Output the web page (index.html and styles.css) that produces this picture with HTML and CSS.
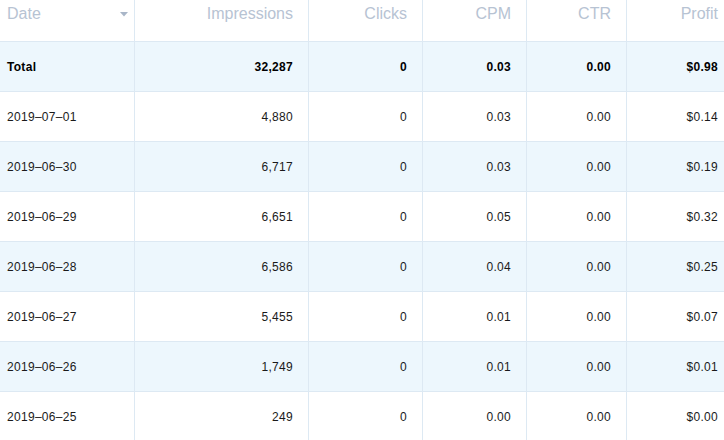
FILE: index.html
```html
<!DOCTYPE html>
<html>
<head>
<meta charset="utf-8">
<link rel="stylesheet" href="styles.css">
</head>
<body>
<div class="grid">
  <div class="cell head left">Date<svg class="sort" width="8" height="5" viewBox="0 0 8 5"><path d="M0 0H8L4 4.5Z" fill="#a9b6c8"/></svg></div>
  <div class="cell head">Impressions</div>
  <div class="cell head">Clicks</div>
  <div class="cell head">CPM</div>
  <div class="cell head">CTR</div>
  <div class="cell head last">Profit</div>

  <div class="cell alt bold left">Total</div>
  <div class="cell alt bold">32,287</div>
  <div class="cell alt bold">0</div>
  <div class="cell alt bold">0.03</div>
  <div class="cell alt bold">0.00</div>
  <div class="cell alt bold last">$0.98</div>

  <div class="cell left">2019–07–01</div>
  <div class="cell">4,880</div>
  <div class="cell">0</div>
  <div class="cell">0.03</div>
  <div class="cell">0.00</div>
  <div class="cell last">$0.14</div>

  <div class="cell alt left">2019–06–30</div>
  <div class="cell alt">6,717</div>
  <div class="cell alt">0</div>
  <div class="cell alt">0.03</div>
  <div class="cell alt">0.00</div>
  <div class="cell alt last">$0.19</div>

  <div class="cell left">2019–06–29</div>
  <div class="cell">6,651</div>
  <div class="cell">0</div>
  <div class="cell">0.05</div>
  <div class="cell">0.00</div>
  <div class="cell last">$0.32</div>

  <div class="cell alt left">2019–06–28</div>
  <div class="cell alt">6,586</div>
  <div class="cell alt">0</div>
  <div class="cell alt">0.04</div>
  <div class="cell alt">0.00</div>
  <div class="cell alt last">$0.25</div>

  <div class="cell left">2019–06–27</div>
  <div class="cell">5,455</div>
  <div class="cell">0</div>
  <div class="cell">0.01</div>
  <div class="cell">0.00</div>
  <div class="cell last">$0.07</div>

  <div class="cell alt left">2019–06–26</div>
  <div class="cell alt">1,749</div>
  <div class="cell alt">0</div>
  <div class="cell alt">0.01</div>
  <div class="cell alt">0.00</div>
  <div class="cell alt last">$0.01</div>

  <div class="cell left">2019–06–25</div>
  <div class="cell">249</div>
  <div class="cell">0</div>
  <div class="cell">0.00</div>
  <div class="cell">0.00</div>
  <div class="cell last">$0.00</div>
</div>
</body>
</html>
```
FILE: styles.css
```css
html, body {
  margin: 0;
  padding: 0;
  background: #ffffff;
  overflow: hidden;
}
.grid {
  display: grid;
  grid-template-columns: 135px 174px 114px 104px 100px 97px;
  grid-auto-rows: 50px;
  grid-template-rows: 42px;
  font-family: "Liberation Sans", Arial, sans-serif;
  font-size: 12px;
  letter-spacing: 0.3px;
  color: #1a1a1a;
}
.cell {
  box-sizing: border-box;
  border-right: 1px solid #dde9f3;
  border-bottom: 1px solid #dde9f3;
  padding: 0 15px 0 7px;
  display: flex;
  align-items: center;
  justify-content: flex-end;
  white-space: nowrap;
}
.cell.left {
  justify-content: flex-start;
}
.cell.last {
  border-right: none;
  padding-right: 6px;
}
.cell.alt {
  background: #edf7fd;
}
.cell.bold {
  font-weight: bold;
  color: #000;
}
.head {
  font-size: 16px;
  letter-spacing: 0;
  color: #b7c3d3;
  align-items: flex-start;
  padding-top: 5px;
  line-height: 18px;
}
.head.left {
  justify-content: space-between;
  padding-right: 6px;
}
.sort {
  margin-top: 7px;
}
```
